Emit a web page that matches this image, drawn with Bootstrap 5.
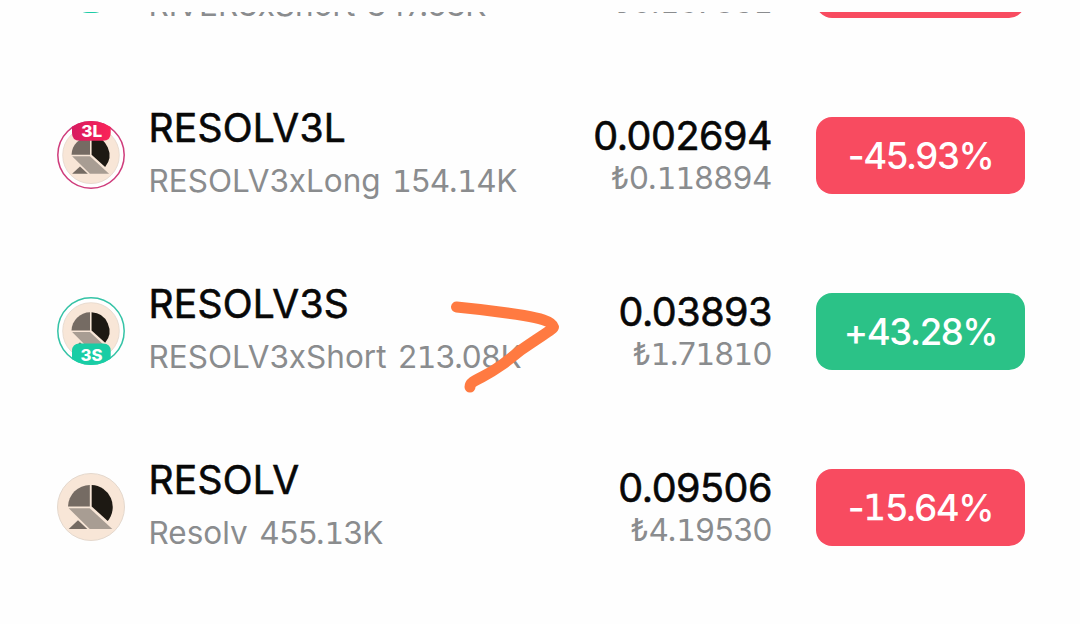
<!DOCTYPE html>
<html lang="tr">
<head>
    <meta charset="UTF-8">
    <meta name="viewport" content="width=device-width, initial-scale=1.0">
    <title>RESOLV</title>
    <link href="https://cdn.jsdelivr.net/npm/bootstrap@5.3.0/dist/css/bootstrap.min.css" rel="stylesheet">
    <style>
        body {
            font-family: Inter, "Liberation Sans", sans-serif;
            background: #fefefe;
            color: #080808;
            height: 624px;
            overflow: hidden;
        }
        .coin-list {
            margin-top: 12px;
            height: 612px;
        }
        .coin-list .coin-row:first-child {
            margin-top: -121px;
        }
        .coin-row {
            height: 176px;
            padding: 0 55px 0 57px;
        }
        .coin-icon {
            width: 68px;
            height: 68px;
            margin-right: 23.5px;
        }
        .side-label {
            font-weight: 800;
            font-size: 15.5px;
            fill: #fff;
        }
        .coin-info {
            padding-bottom: 2px;
        }
        .coin-name {
            font-size: 39px;
            line-height: 54px;
            letter-spacing: .2px;
            -webkit-text-stroke: .6px;
        }
        .coin-detail {
            font-size: 31.5px;
            line-height: 52px;
            color: #8a8c8e;
            gap: 11.5px;
        }
        .coin-detail span + span {
            letter-spacing: -.4px;
        }
        .coin-values {
            padding-top: 1px;
        }
        .coin-price {
            font-size: 39.5px;
            line-height: 44px;
            letter-spacing: -.5px;
            -webkit-text-stroke: .6px;
        }
        .coin-lira {
            font-size: 31.5px;
            line-height: 40px;
            letter-spacing: -.3px;
            color: #8a8c8e;
        }
        /* the 1 with a foot */
        .coin-row i {
            font-family: "DejaVu Sans";
            font-style: normal;
            font-weight: 400;
            font-size: .98em;
            line-height: 1;
            letter-spacing: -.8px;
        }
        .change-box {
            width: 209px;
            height: 77px;
            margin-left: 44px;
            padding-top: 2px;
            border-radius: 16px;
            color: #fff;
            font-size: 36.5px;
            font-weight: 500;
            letter-spacing: -1.4px;
        }
        .change-box i {
            -webkit-text-stroke: .5px;
        }
        .box-down {
            background: #f84b60;
        }
        .box-up {
            background: #2bc287;
        }
        .pen-mark {
            left: 440px;
            top: 290px;
        }
    </style>
</head>
<body>

    <svg width="0" height="0" class="position-absolute">
        <defs>
            <symbol id="resolv" viewBox="0 0 68 68">
                <circle cx="34" cy="34" r="33.5" fill="#f8e6d7" stroke="#e4d8cd"/>
                <path d="M11 33.5A22 22 0 0 1 32.8 12V33.5Z" fill="#756b63"/>
                <path d="M34.7 12A22 22 0 0 1 50.7 48L34.7 33.5Z" fill="#1d1913"/>
                <path d="M11.7 35.3H32.7L55.3 56H32.7Z" fill="#a89d93"/>
                <path d="M11.7 56L21 47.3L30.3 56Z" fill="#756b63"/>
            </symbol>
            <linearGradient id="pink">
                <stop offset="0" stop-color="#d81b60"/>
                <stop offset="1" stop-color="#fa2458"/>
            </linearGradient>
            <clipPath id="disc"><circle cx="34" cy="34" r="34"/></clipPath>
            <symbol id="long" viewBox="0 0 68 68">
                <circle cx="34" cy="34" r="33.2" fill="#fff" stroke="#cf3d7c" stroke-width="1.5"/>
                <use href="#resolv" x="5.2" y="5.4" width="57.6" height="57.6"/>
                <path d="M15 0H53.7V12Q53.7 19.7 46 19.7H22.7Q15 19.7 15 12Z" fill="url(#pink)" clip-path="url(#disc)"/>
                <text class="side-label" x="24.2" y="16.4" textLength="21" lengthAdjust="spacingAndGlyphs">3L</text>
            </symbol>
            <symbol id="short" viewBox="0 0 68 68">
                <circle cx="34" cy="34" r="33.2" fill="#fff" stroke="#35c3a6" stroke-width="1.5"/>
                <use href="#resolv" x="5.2" y="5.2" width="57.6" height="57.6"/>
                <path d="M15 68H53.7V54Q53.7 46.5 46 46.5H22.7Q15 46.5 15 54Z" fill="#19cda5" clip-path="url(#disc)"/>
                <text class="side-label" x="23.6" y="63.7" textLength="22" lengthAdjust="spacingAndGlyphs">3S</text>
            </symbol>
        </defs>
    </svg>

    <main class="coin-list overflow-hidden">
        <div class="d-flex flex-column">
            <div class="coin-row d-flex align-items-center">
                <svg class="coin-icon"><use href="#short"/></svg>
                <div class="coin-info">
                    <div class="coin-name">RIVER3S</div>
                    <div class="coin-detail d-flex"><span>RIVER3xShort</span><span>347.53K</span></div>
                </div>
                <div class="coin-values ms-auto text-end">
                    <div class="coin-price">0.003803</div>
                    <div class="coin-lira">₺0.<i>1</i>6783<i>1</i></div>
                </div>
                <div class="change-box box-down d-flex align-items-center justify-content-center">-48.20%</div>
            </div>

            <div class="coin-row d-flex align-items-center">
                <svg class="coin-icon"><use href="#long"/></svg>
                <div class="coin-info">
                    <div class="coin-name">RESOLV3L</div>
                    <div class="coin-detail d-flex"><span>RESOLV3xLong</span><span><i>1</i>54.<i>1</i>4K</span></div>
                </div>
                <div class="coin-values ms-auto text-end">
                    <div class="coin-price">0.002694</div>
                    <div class="coin-lira">₺0.<i>1</i><i>1</i>8894</div>
                </div>
                <div class="change-box box-down d-flex align-items-center justify-content-center">-45.93%</div>
            </div>

            <div class="coin-row d-flex align-items-center">
                <svg class="coin-icon"><use href="#short"/></svg>
                <div class="coin-info">
                    <div class="coin-name">RESOLV3S</div>
                    <div class="coin-detail d-flex"><span>RESOLV3xShort</span><span>2<i>1</i>3.08K</span></div>
                </div>
                <div class="coin-values ms-auto text-end">
                    <div class="coin-price">0.03893</div>
                    <div class="coin-lira">₺<i>1</i>.7<i>1</i>8<i>1</i>0</div>
                </div>
                <div class="change-box box-up d-flex align-items-center justify-content-center">+43.28%</div>
            </div>

            <div class="coin-row d-flex align-items-center">
                <svg class="coin-icon"><use href="#resolv"/></svg>
                <div class="coin-info">
                    <div class="coin-name">RESOLV</div>
                    <div class="coin-detail d-flex"><span>Resolv</span><span>455.<i>1</i>3K</span></div>
                </div>
                <div class="coin-values ms-auto text-end">
                    <div class="coin-price">0.09506</div>
                    <div class="coin-lira">₺4.<i>1</i>9530</div>
                </div>
                <div class="change-box box-down d-flex align-items-center justify-content-center">-<i>1</i>5.64%</div>
            </div>
        </div>
    </main>

    <!-- hand-drawn arrow over the 3S row -->
    <svg class="pen-mark position-absolute" width="130" height="110" fill="none" stroke="#ff7a41" stroke-width="11" stroke-linecap="round" stroke-linejoin="round">
        <path d="M16.500 17C38 19 62 22 84 25.500C98 28 112 31 113.500 37C113.500 39 104 44 81 60C66 72 56 80 42 87C34 91 30 93 30 97"/>
    </svg>

    <script src="https://cdn.jsdelivr.net/npm/bootstrap@5.3.0/dist/js/bootstrap.bundle.min.js"></script>
</body>
</html>
